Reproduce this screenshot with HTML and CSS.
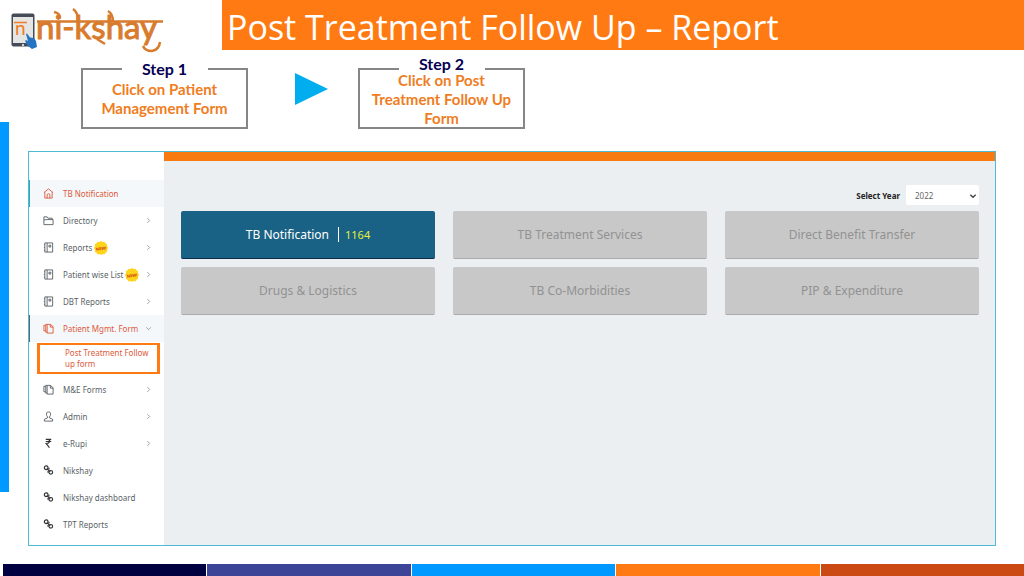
FILE: index.html
```html
<!DOCTYPE html>
<html lang="en">
<head>
<meta charset="utf-8">
<title>Post Treatment Follow Up – Report</title>
<link rel="stylesheet" href="styles.css">
</head>
<body>
<svg class="defs" aria-hidden="true">
  <symbol id="home" viewBox="0 0 12 12"><path d="M1 5 6 1l5 4M2 4.500V11h8V4.500M4.500 11V7q1.500-1.500 3 0v4"/></symbol>
  <symbol id="folder" viewBox="0 0 12 12"><path d="M1 10.500V2h3.500l1 1.500H10V5M1 10.500h10V5H3.500L1 5.500"/></symbol>
  <symbol id="report" viewBox="0 0 12 12"><path d="M2 1h8.500v10H2zM4.500 1v10M1 3h1M1 6h1M1 9h1M6.500 3.500h2v2H6.500z"/></symbol>
  <symbol id="forms" viewBox="0 0 12 12"><path d="M4.500 1.500h3.500l3 2.500v7H4.500zM8 1.500V4.500h3M4.500 10H3V1.500h1.500M3 8.500H1v-6h2"/></symbol>
  <symbol id="user" viewBox="0 0 12 12"><path d="M6 1C3.500 1 3.500 3 4 5l1 1.500v1L1.500 9v2h9V9L7 7.500v-1L8 5c.5-2 .5-4-2-4z"/></symbol>
  <symbol id="rupee" viewBox="0 0 12 12"><path stroke-width="1.300" d="M3 1.500h6M3 3.800h6M3 1.500h2c3.500 0 3 4.500-1.500 4.500L7 10.500"/></symbol>
  <symbol id="link" viewBox="0 0 12 12"><g stroke-width="1.300"><rect x="1.500" y="1" width="4" height="4" rx="2"/><rect x="6.500" y="6" width="4" height="4" rx="2"/><path d="m4 4 4 3.500M6.500 3v2M5.500 6.500v2"/></g></symbol>
  <symbol id="right" viewBox="0 0 6 6"><path d="m2 1 2 2-2 2"/></symbol>
  <symbol id="down" viewBox="0 0 6 6"><path d="m1 2 2 2 2-2"/></symbol>
  <symbol id="new" viewBox="0 0 14 14"><path fill="#ffd51c" stroke="none" d="m7 0 1.500 1 2-.3 1 1.600 1.600 1L13 5l1 2-1 2 .2 1.700-1.700 1-1 1.700-2-.4L7 14l-1.500-1-2 .4-1-1.700-1.700-1L1 9 0 7l1-2-.2-1.700 1.700-1 1-1.600 2 .3z"/><text x="7" y="9" transform="rotate(-8 7 7)">NEW!</text></symbol>
</svg>

<header class="header">
  <svg class="logo" viewBox="0 0 222 50" role="img" aria-label="ni-kshay">
    <rect x="11.500" y="13.500" width="23" height="33" rx="2" fill="#454c57"/>
    <rect x="13" y="17" width="20" height="26" fill="#e5e5e3"/>
    <circle cx="23" cy="45" r="1" fill="#fff"/>
    <path class="logo-line logo-thin" d="M14 22.500h13"/>
    <text class="logo-mini" x="15" y="35">n</text>
    <path fill="#2474c3" d="m26 34 1-.5 3 4 4 .5 2 3 1 6-5 2-4-3-3-5 1-1 2 1z"/>
    <text class="logo-text" x="36" y="39">ni-kshay</text>
    <path class="logo-line" d="M37 21.500h126M54 12q6 1 6 6M73 9q5 3 5 12M108 11q5 3 5 10M97 39l8 5M143 46q2 5 9 5 7-1 8-9"/>
  </svg>
  <h1 class="title">Post Treatment Follow Up – Report</h1>
</header>

<div class="body">
  <div class="rail"></div>
  <div class="content">
    <div class="steps">
      <section class="step">
        <h2 class="step-label">Step 1</h2>
        <p class="step-text">Click on Patient Management Form</p>
      </section>
      <svg class="arrow" viewBox="0 0 33 32" aria-hidden="true"><path d="M0 0v32l33-16z"/></svg>
      <section class="step step-tall">
        <h2 class="step-label">Step 2</h2>
        <p class="step-text">Click on Post Treatment Follow Up Form</p>
      </section>
    </div>

    <div class="app">
      <nav class="menu">
        <a class="item active home" href="#"><svg class="icon"><use href="#home"/></svg>TB Notification</a>
        <a class="item" href="#"><svg class="icon"><use href="#folder"/></svg>Directory<svg class="chevron"><use href="#right"/></svg></a>
        <a class="item" href="#"><svg class="icon"><use href="#report"/></svg>Reports<svg class="new"><use href="#new"/></svg><svg class="chevron"><use href="#right"/></svg></a>
        <a class="item" href="#"><svg class="icon"><use href="#report"/></svg>Patient wise List<svg class="new"><use href="#new"/></svg><svg class="chevron"><use href="#right"/></svg></a>
        <a class="item" href="#"><svg class="icon"><use href="#report"/></svg>DBT Reports<svg class="chevron"><use href="#right"/></svg></a>
        <a class="item active" href="#"><svg class="icon"><use href="#forms"/></svg>Patient Mgmt. Form<svg class="chevron"><use href="#down"/></svg></a>
        <a class="subitem" href="#">Post Treatment Follow up form</a>
        <a class="item" href="#"><svg class="icon"><use href="#forms"/></svg>M&amp;E Forms<svg class="chevron"><use href="#right"/></svg></a>
        <a class="item" href="#"><svg class="icon"><use href="#user"/></svg>Admin<svg class="chevron"><use href="#right"/></svg></a>
        <a class="item" href="#"><svg class="icon dark"><use href="#rupee"/></svg>e-Rupi<svg class="chevron"><use href="#right"/></svg></a>
        <a class="item" href="#"><svg class="icon dark"><use href="#link"/></svg>Nikshay</a>
        <a class="item" href="#"><svg class="icon dark"><use href="#link"/></svg>Nikshay dashboard</a>
        <a class="item" href="#"><svg class="icon dark"><use href="#link"/></svg>TPT Reports</a>
      </nav>
      <main class="main">
        <div class="filter">
          <label for="year">Select Year</label>
          <span class="select-wrap">
            <select id="year" class="year"><option>2022</option></select>
            <svg class="caret" viewBox="0 0 6 6"><use href="#down"/></svg>
          </span>
        </div>
        <div class="cards">
          <button class="card card-on">TB Notification<span class="count">1164</span></button>
          <button class="card">TB Treatment Services</button>
          <button class="card">Direct Benefit Transfer</button>
          <button class="card">Drugs &amp; Logistics</button>
          <button class="card">TB Co-Morbidities</button>
          <button class="card">PIP &amp; Expenditure</button>
        </div>
      </main>
    </div>
  </div>
</div>

<footer class="stripes">
  <div class="stripe navy"></div>
  <div class="stripe indigo"></div>
  <div class="stripe blue"></div>
  <div class="stripe orange"></div>
  <div class="stripe rust"></div>
</footer>
</body>
</html>
```

FILE: styles.css
```css
* { box-sizing: border-box; }
body {
  margin: 0;
  min-height: 100vh;
  display: flex;
  flex-direction: column;
  background: #fff;
  font-family: "Noto Sans", "Open Sans", sans-serif;
}
.defs { display: none; }
a { text-decoration: none; }

.header { display: flex; height: 50px; }
.logo { width: 222px; height: 50px; flex: none; overflow: visible; }
.logo-text, .logo-mini { font-family: Lato, sans-serif; fill: #d87b2c; stroke: #d87b2c; stroke-width: 1; }
.logo-text { font-size: 33px; }
.logo-mini { font-size: 19px; fill: #f17c23; stroke: none; }
.logo-line { fill: none; stroke: #d87b2c; stroke-width: 2.5; }
.logo-thin { stroke: #f17c23; stroke-width: 1.5; }
.title {
  flex: 1;
  margin: 0;
  padding-left: 5px;
  background: #ff7a12;
  color: #fff;
  font-family: "Open Sans", sans-serif;
  font-size: 34px;
  font-weight: 400;
  line-height: 54px;
  white-space: nowrap;
}

.body { display: flex; flex: 1; }
.rail { width: 9px; margin: 72px 0; background: #0099ff; }
.content { flex: 1; display: flex; flex-direction: column; padding: 18px 28px 18px 19px; }

.steps { display: flex; align-items: flex-start; padding-left: 53px; }
.step {
  width: 167px;
  height: 61px;
  border: 2px solid #868686;
  text-align: center;
  font-family: Lato, "Open Sans", sans-serif;
}
.step-label {
  width: 86px;
  margin: -9px auto 3px;
  background: #fff;
  color: #050052;
  font-size: 16px;
  line-height: 16px;
}
.step-tall .step-label { margin: -14px auto -1px; }
.step-text { margin: 0; color: #ef7d22; font-size: 15px; font-weight: 700; line-height: 19px; }
.step-tall .step-text { padding: 0 8px; }
.arrow { width: 33px; height: 32px; margin: 5px 30px 0 47px; fill: #00aeef; }

.app { display: flex; flex: 1; margin-top: 22px; border: 1px solid #50b9d6; }
.menu { width: 135px; padding-top: 28px; background: #fff; font-size: 8px; }
.item {
  display: flex;
  align-items: center;
  height: 27px;
  padding: 0 12px 0 14px;
  color: #5a5f66;
  white-space: nowrap;
}
.icon { width: 11px; height: 11px; margin-right: 9px; flex: none; fill: none; stroke: currentColor; stroke-width: 1; }
.dark { color: #333; }
.chevron { width: 7px; height: 7px; margin-left: auto; fill: none; stroke: #8c9298; stroke-width: .7; }
.new { width: 14px; height: 14px; margin-left: 2px; font-size: 4px; font-weight: 700; text-anchor: middle; fill: #d33a10; }
.active { color: #dc5a3c; background: #f5f8fa; border-left: 1px solid #666; padding-left: 13px; }
.home { border-left-color: #35a6b5; }
.subitem {
  display: block;
  margin: 1px 4px 2px 8px;
  padding: 2px 0 3px 25px;
  border: 3px solid #ff7a12;
  border-width: 2px 3px;
  color: #dc5a3c;
  line-height: 11px;
}

.main { flex: 1; border-top: 9px solid #f77b10; background: #ebeff2; padding: 24px 16px 16px 17px; }
.filter { display: flex; justify-content: flex-end; align-items: center; gap: 6px; color: #222; font-size: 8px; font-weight: 700; }
.select-wrap { position: relative; display: flex; }
.year {
  width: 73px;
  height: 20px;
  padding: 0 9px;
  border: 0;
  border-radius: 2px;
  appearance: none;
  background: #fff;
  color: #666;
  font: 8px "Noto Sans", sans-serif;
}
.caret { position: absolute; right: 2px; top: 7px; width: 8px; height: 8px; fill: none; stroke: #444; pointer-events: none; }
.cards { display: grid; grid-template-columns: repeat(3, 1fr); gap: 8px 18px; margin-top: 6px; }
.card {
  height: 48px;
  padding: 0;
  border: 0;
  border-bottom: 1px solid #aaa;
  border-radius: 2px;
  background: #c8c8c8;
  color: #929292;
  font: 12px "Noto Sans", sans-serif;
}
.card-on { background: #1a6285; border-bottom-color: #0b2c45; color: #fff; }
.count { margin-left: 9px; padding-left: 6px; border-left: 1px solid #fff; color: #e4f03a; font-size: 11px; }

.stripes { display: flex; height: 12px; padding-left: 3px; gap: 1px; }
.stripe { flex: 1; }
.navy { background: #000040; }
.indigo { background: #3c4497; }
.blue { background: #0099ff; }
.orange { background: #ff7a12; }
.rust { background: #cb4a13; }
```
